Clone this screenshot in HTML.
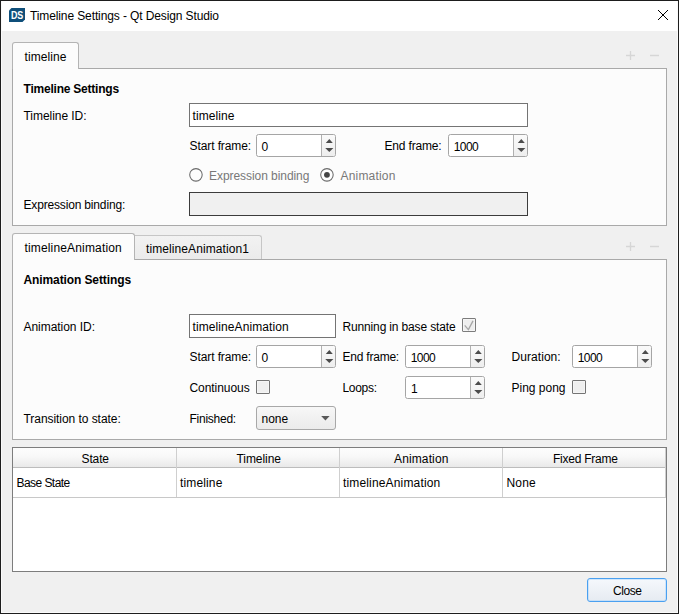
<!DOCTYPE html>
<html><head><meta charset="utf-8"><title>Timeline Settings - Qt Design Studio</title>
<style>
html,body{margin:0;padding:0}
body{width:679px;height:614px;overflow:hidden;background:#f0f0f0;position:relative;font-family:"Liberation Sans",sans-serif;font-size:12px;color:#000}
.abs,.t,.spin,.pane,.tab,.inp,.cb,.radio{position:absolute;box-sizing:content-box}
.t{white-space:nowrap;line-height:14px;height:14px;font-size:12px}
.b{font-weight:bold}
.g{color:#787878}
.pane{background:#fcfcfc;border:1px solid #a9a9a9}
.tab{border:1px solid #c6c6c6;border-bottom:none}
.tab.act{background:#fcfcfc;border-color:#b4b4b4;border-radius:3px 3px 0 0}
.tab.in{background:linear-gradient(#f2f2f2,#ebebeb);border-color:#c6c6c6;border-radius:0 3px 0 0}
.inp{background:#fff;border:1px solid #747474}
.inp.dis{background:#f0f0f0;border-color:#3c3c3c}
.spin{background:#fff;border:1px solid #a5a5a5;border-radius:2.5px}
.spin .sb{position:absolute;right:0;top:0;bottom:0;width:13px;border-left:1px solid #b0b0b0;background:linear-gradient(#fafafa,#f4f4f4 50%,#eeeeee);border-radius:0 2px 2px 0}
.spin .ar{position:absolute;left:68px;top:4px}
.cb{width:12px;height:12px;border:1px solid #747474;background:#efefef;border-radius:1px;box-shadow:inset 0 0 0 1px #f5f5f5}
.cb.dis{border-color:#7c7c7c;background:#eeeeee}
.radio{width:11px;height:11px;border:1px solid #6a6a6a;border-radius:50%;background:#fcfcfc}
</style></head><body>

<div class="abs" style="left:0;top:0;width:679px;height:31px;background:#fff"></div>
<div class="abs" style="left:0;top:0;width:679px;height:1px;background:#1d1d1d"></div>
<div class="abs" style="left:0;top:613px;width:679px;height:1px;background:#1d1d1d"></div>
<div class="abs" style="left:0;top:612px;width:679px;height:1px;background:#fafafa"></div>
<div class="abs" style="left:0;top:0;width:1px;height:614px;background:#1d1d1d"></div>
<div class="abs" style="left:678px;top:0;width:1px;height:614px;background:#1d1d1d"></div>
<div class="abs" style="left:677px;top:1px;width:1px;height:612px;background:#fafafa"></div>
<div class="abs" style="left:1px;top:1px;width:1px;height:612px;background:#fafafa"></div>
<svg class="abs" style="left:9px;top:8px" width="16" height="14" viewBox="0 0 16 14"><polygon points="2.5,0 16,0 16,11.5 13.5,14 0,14 0,2.5" fill="#0f4f7a"/><text x="8.1" y="11.1" text-anchor="middle" textLength="12.4" lengthAdjust="spacingAndGlyphs" font-family="Liberation Sans, sans-serif" font-size="11.5" font-weight="bold" fill="#ffffff">DS</text></svg>
<svg class="abs" style="left:657px;top:9px" width="12" height="12" viewBox="0 0 12 12"><path d="M1 1 L11 11 M11 1 L1 11" stroke="#000" stroke-width="1" fill="none"/></svg>
<div class="pane" style="left:12px;top:68px;width:653px;height:156px"></div>
<div class="pane" style="left:12px;top:259px;width:653px;height:179px"></div>
<div class="tab act" style="left:12px;top:42px;width:65px;height:26px"></div>
<div class="tab act" style="left:12px;top:233px;width:121px;height:26px"></div>
<div class="tab in" style="left:135px;top:235px;width:126px;height:23px;border-left:none"></div>
<svg class="abs" style="left:625px;top:50px" width="40" height="11" viewBox="0 0 40 11"><path d="M1 5.5 H10 M5.5 1 V10 M25 5.5 H34" stroke="#d6d6d6" stroke-width="1.3" fill="none"/></svg>
<svg class="abs" style="left:625px;top:241px" width="40" height="11" viewBox="0 0 40 11"><path d="M1 5.5 H10 M5.5 1 V10 M25 5.5 H34" stroke="#d6d6d6" stroke-width="1.3" fill="none"/></svg>
<div class="inp" style="left:189px;top:103px;width:337px;height:22px"></div>
<div class="inp dis" style="left:189px;top:192px;width:337px;height:22px"></div>
<div class="inp" style="left:189px;top:314px;width:145px;height:22px"></div>
<div class="spin" style="left:256px;top:134px;width:78px;height:21px"><div class="sb"></div><svg class="ar" width="9" height="14" viewBox="0 0 9 14"><path d="M0.8 4 L4.3 0.1 L7.8 4 Z M0.2 9.1 L8.4 9.1 L4.3 13.1 Z" fill="#4c4c4c"/></svg></div>
<div class="spin" style="left:448px;top:134px;width:78px;height:21px"><div class="sb"></div><svg class="ar" width="9" height="14" viewBox="0 0 9 14"><path d="M0.8 4 L4.3 0.1 L7.8 4 Z M0.2 9.1 L8.4 9.1 L4.3 13.1 Z" fill="#4c4c4c"/></svg></div>
<div class="spin" style="left:256px;top:345px;width:78px;height:21px"><div class="sb"></div><svg class="ar" width="9" height="14" viewBox="0 0 9 14"><path d="M0.8 4 L4.3 0.1 L7.8 4 Z M0.2 9.1 L8.4 9.1 L4.3 13.1 Z" fill="#4c4c4c"/></svg></div>
<div class="spin" style="left:405px;top:345px;width:78px;height:21px"><div class="sb"></div><svg class="ar" width="9" height="14" viewBox="0 0 9 14"><path d="M0.8 4 L4.3 0.1 L7.8 4 Z M0.2 9.1 L8.4 9.1 L4.3 13.1 Z" fill="#4c4c4c"/></svg></div>
<div class="spin" style="left:572px;top:345px;width:78px;height:21px"><div class="sb"></div><svg class="ar" width="9" height="14" viewBox="0 0 9 14"><path d="M0.8 4 L4.3 0.1 L7.8 4 Z M0.2 9.1 L8.4 9.1 L4.3 13.1 Z" fill="#4c4c4c"/></svg></div>
<div class="spin" style="left:405px;top:376px;width:78px;height:21px"><div class="sb"></div><svg class="ar" width="9" height="14" viewBox="0 0 9 14"><path d="M0.8 4 L4.3 0.1 L7.8 4 Z M0.2 9.1 L8.4 9.1 L4.3 13.1 Z" fill="#4c4c4c"/></svg></div>
<svg class="abs" style="left:188px;top:167px" width="16" height="16" viewBox="0 0 16 16"><circle cx="7.95" cy="7.85" r="6.25" fill="#fdfdfd" stroke="#6a6a6a" stroke-width="1.05"/></svg>
<svg class="abs" style="left:319px;top:167px" width="16" height="16" viewBox="0 0 16 16"><circle cx="7.95" cy="7.85" r="6.25" fill="#fdfdfd" stroke="#6a6a6a" stroke-width="1.05"/><circle cx="7.95" cy="7.85" r="2.9" fill="#444444"/></svg>
<div class="cb dis" style="left:462px;top:318px"><svg width="12" height="12" viewBox="0 0 12 12" style="position:absolute;left:0;top:0"><path d="M1.7 6.3 L5.4 10.6 L10 1.9" stroke="#a6a6a6" stroke-width="1.3" fill="none"/></svg></div>
<div class="cb" style="left:256px;top:380px"></div>
<div class="cb" style="left:572px;top:380px"></div>
<div class="abs" style="left:256px;top:406px;width:78px;height:22px;border:1px solid #a8a8a8;border-radius:3px;background:linear-gradient(#f7f7f7,#ebebeb)"><svg style="position:absolute;left:63.6px;top:8.9px" width="9" height="5" viewBox="0 0 9 5"><path d="M0.2 0.1 H8.6 L4.4 4.5 Z" fill="#585858"/></svg></div>
<div class="abs" style="left:12px;top:447px;width:653px;height:123px;border:1px solid #7d7d7d;background:#fff"></div>
<div class="abs" style="left:13px;top:448px;width:653px;height:19px;background:linear-gradient(#fdfdfd 0%,#f8f8f8 45%,#e9e9e9 100%)"></div>
<div class="abs" style="left:13px;top:467px;width:653px;height:1px;background:#bcbcbc"></div>
<div class="abs" style="left:13px;top:497px;width:653px;height:1px;background:#c8c8c8"></div>
<div class="abs" style="left:176px;top:448px;width:1px;height:49px;background:#cfcfcf"></div>
<div class="abs" style="left:339px;top:448px;width:1px;height:49px;background:#cfcfcf"></div>
<div class="abs" style="left:502px;top:448px;width:1px;height:49px;background:#cfcfcf"></div>
<div class="abs" style="left:665px;top:448px;width:1px;height:49px;background:#cfcfcf"></div>
<div class="abs" style="left:587px;top:578px;width:78px;height:22px;border:1px solid #4aa0f0;border-radius:3px;background:linear-gradient(#f5f8fc,#e6ebf1);box-shadow:inset 0 0 0 1px rgba(140,200,255,0.35)"></div>
<span id="t_title" class="t " style="left:30px;top:8.80px;letter-spacing:-0.114px">Timeline Settings - Qt Design Studio</span>
<span id="t_tab1" class="t " style="left:24.5px;top:49.80px;letter-spacing:0.071px">timeline</span>
<span id="t_h1" class="t b" style="left:23.5px;top:81.80px;letter-spacing:-0.219px">Timeline Settings</span>
<span id="t_tid" class="t " style="left:23.5px;top:108.80px;letter-spacing:-0.045px">Timeline ID:</span>
<span id="t_in1" class="t " style="left:192.5px;top:108.80px;letter-spacing:0.071px">timeline</span>
<span id="t_sf1" class="t " style="left:189.5px;top:138.80px;letter-spacing:-0.091px">Start frame:</span>
<span id="t_v0" class="t " style="left:261.5px;top:139.80px;letter-spacing:0.000px">0</span>
<span id="t_ef1" class="t " style="left:384.5px;top:138.80px;letter-spacing:-0.167px">End frame:</span>
<span id="t_v1" class="t " style="left:453.75px;top:139.80px;letter-spacing:-0.583px">1000</span>
<span id="t_eb" class="t g" style="left:209px;top:168.80px;letter-spacing:-0.059px">Expression binding</span>
<span id="t_an" class="t g" style="left:340.5px;top:168.80px;letter-spacing:0.188px">Animation</span>
<span id="t_ebl" class="t " style="left:23.5px;top:197.80px;letter-spacing:-0.167px">Expression binding:</span>
<span id="t_tab2" class="t " style="left:24.5px;top:240.80px;letter-spacing:0.156px">timelineAnimation</span>
<span id="t_tab3" class="t " style="left:146px;top:241.80px;letter-spacing:0.088px">timelineAnimation1</span>
<span id="t_h2" class="t b" style="left:23.5px;top:272.80px;letter-spacing:-0.103px">Animation Settings</span>
<span id="t_aid" class="t " style="left:23.5px;top:319.80px;letter-spacing:-0.042px">Animation ID:</span>
<span id="t_in2" class="t " style="left:192.5px;top:319.80px;letter-spacing:0.094px">timelineAnimation</span>
<span id="t_run" class="t " style="left:342.5px;top:319.80px;letter-spacing:-0.150px">Running in base state</span>
<span id="t_sf2" class="t " style="left:189.5px;top:349.80px;letter-spacing:-0.091px">Start frame:</span>
<span id="t_v2" class="t " style="left:261.5px;top:350.80px;letter-spacing:0.000px">0</span>
<span id="t_ef2" class="t " style="left:342.5px;top:349.80px;letter-spacing:-0.222px">End frame:</span>
<span id="t_v3" class="t " style="left:410.75px;top:350.80px;letter-spacing:-0.583px">1000</span>
<span id="t_dur" class="t " style="left:511.5px;top:349.80px;letter-spacing:0.062px">Duration:</span>
<span id="t_v4" class="t " style="left:577.75px;top:350.80px;letter-spacing:-0.583px">1000</span>
<span id="t_cont" class="t " style="left:189.5px;top:380.80px;letter-spacing:-0.056px">Continuous</span>
<span id="t_loops" class="t " style="left:342.5px;top:380.80px;letter-spacing:-0.300px">Loops:</span>
<span id="t_v5" class="t " style="left:411px;top:381.80px;letter-spacing:0.000px">1</span>
<span id="t_pp" class="t " style="left:511.5px;top:380.80px;letter-spacing:0.000px">Ping pong</span>
<span id="t_tts" class="t " style="left:23.5px;top:411.80px;letter-spacing:-0.053px">Transition to state:</span>
<span id="t_fin" class="t " style="left:189.5px;top:411.80px;letter-spacing:-0.250px">Finished:</span>
<span id="t_none" class="t " style="left:261.5px;top:411.80px;letter-spacing:0.000px">none</span>
<span id="t_hs" class="t " style="left:81.5px;top:451.80px;letter-spacing:-0.125px">State</span>
<span id="t_ht" class="t " style="left:236.5px;top:451.80px;letter-spacing:-0.071px">Timeline</span>
<span id="t_ha" class="t " style="left:394px;top:451.80px;letter-spacing:0.125px">Animation</span>
<span id="t_hf" class="t " style="left:553px;top:451.80px;letter-spacing:-0.250px">Fixed Frame</span>
<span id="t_c1" class="t " style="left:16.5px;top:475.80px;letter-spacing:-0.556px">Base State</span>
<span id="t_c2" class="t " style="left:180px;top:475.80px;letter-spacing:0.143px">timeline</span>
<span id="t_c3" class="t " style="left:343px;top:475.80px;letter-spacing:0.156px">timelineAnimation</span>
<span id="t_c4" class="t " style="left:506.5px;top:475.80px;letter-spacing:0.167px">None</span>
<span id="t_close" class="t " style="left:613px;top:583.80px;letter-spacing:-0.425px">Close</span>
</body></html>
